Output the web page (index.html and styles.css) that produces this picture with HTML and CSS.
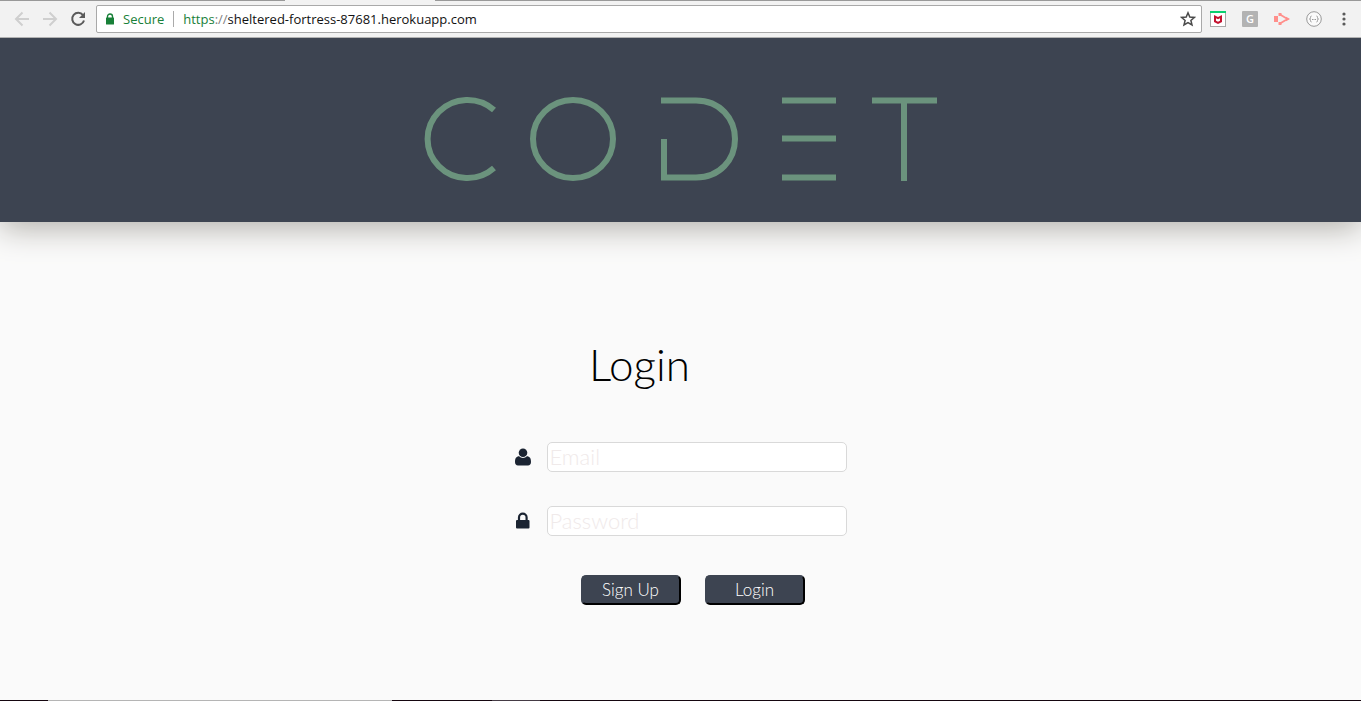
FILE: index.html
```html
<!DOCTYPE html>
<html lang="en">
<head>
<meta charset="utf-8">
<meta name="viewport" content="width=device-width, initial-scale=1">
<title>Codet</title>
<link rel="stylesheet" href="styles.css">
</head>
<body>
<div class="tab-edge"><span class="tab-gap"></span></div>
<nav class="toolbar" aria-label="Browser toolbar">
  <button class="tool" type="button" aria-label="Back" disabled>
    <svg width="16" height="16" viewBox="0 0 16 16" fill="none" stroke="#cfcfcf" stroke-width="2"><path d="M15 8H2M8.500 1.500L2 8l6.500 6.500"/></svg>
  </button>
  <button class="tool" type="button" aria-label="Forward" disabled>
    <svg width="16" height="16" viewBox="0 0 16 16" fill="none" stroke="#cfcfcf" stroke-width="2"><path d="M1 8h13M7.500 1.500L14 8l-6.500 6.500"/></svg>
  </button>
  <button class="tool" type="button" aria-label="Reload">
    <svg width="16" height="16" viewBox="0 0 16 16"><path d="M13 4.200A6 6 0 1 0 14 9.500" fill="none" stroke="#5a5a5a" stroke-width="2"/><path d="M15 1v6H9z" fill="#5a5a5a"/></svg>
  </button>
  <div class="omnibox">
    <svg width="10" height="12" viewBox="0 0 10 12"><path d="M2.500 5V3.500a2.500 2.500 0 0 1 5 0V5" fill="none" stroke="#188038" stroke-width="1.400"/><rect x="1" y="4.500" width="8" height="7" rx="0.500" fill="#188038"/></svg>
    <span class="secure">Secure</span>
    <div class="url" role="textbox" aria-label="Address"><span class="scheme">https</span><span class="slashes">://</span>sheltered-fortress-87681.herokuapp.com</div>
    <button class="star" type="button" aria-label="Bookmark this page">
      <svg width="16" height="16" viewBox="0 0 16 16" fill="none" stroke="#4a4a4a" stroke-width="1.500"><path d="M8 1.800l1.800 4.200 4.600.4-3.500 3 1.100 4.500L8 11.500l-4 2.400 1.100-4.500-3.500-3L6.200 6z"/></svg>
    </button>
  </div>
  <div class="extensions">
    <button class="tool" type="button" aria-label="Security extension">
      <svg width="16" height="16" viewBox="0 0 16 16"><rect x="0.500" y="0.500" width="15" height="15" fill="#fff" stroke="#a8a8a8"/><path d="M0 0h16v2H0z" fill="#0bd070"/><path d="M4 4l4 2 4-2v7l-4 2-4-2z" fill="#c4122f"/><path d="M6 7.200v2.500l2 1 2-1V7.200L8 8.300z" fill="#fff"/></svg>
    </button>
    <button class="tool" type="button" aria-label="G extension"><span class="g-badge">G</span></button>
    <button class="tool" type="button" aria-label="Capture extension">
      <svg width="16" height="16" viewBox="0 0 16 16"><path d="M0 5h4v6H0z" fill="#ff8f8b"/><path d="M6 3.500L13.500 8 6 12.500" fill="none" stroke="#ff8f8b" stroke-width="1.800"/><path d="M4.500 2h3v3h-3zM4.500 11h3v3h-3z" fill="#ff8f8b"/><path d="M12 5.800L16 8l-4 2.200z" fill="#ff8f8b"/></svg>
    </button>
    <button class="tool" type="button" aria-label="JSON extension">
      <svg width="16" height="16" viewBox="0 0 16 16" fill="none" stroke="#999"><circle cx="8" cy="8" r="7.300" fill="#fafafa"/><path d="M5.500 5Q4.500 5 4.500 6.500T3.500 8q1 0 1 1.500T5.500 11M10.500 5q1 0 1 1.500T12.500 8q-1 0-1 1.500t-1 1.500"/><path d="M6 8.500h4" stroke-dasharray="1 .5"/></svg>
    </button>
  </div>
  <button class="tool menu" type="button" aria-label="Menu">
    <svg width="4" height="16" viewBox="0 0 4 16" fill="#5a5a5a"><circle cx="2" cy="3" r="1.600"/><circle cx="2" cy="8" r="1.600"/><circle cx="2" cy="13" r="1.600"/></svg>
  </button>
</nav>
<header class="banner">
  <svg class="logo" width="518" height="86" viewBox="0 0 518 86" role="img" aria-label="Codet" fill="none" stroke="#6b937d" stroke-width="6">
    <path d="M72 14A39.800 39 0 1 0 72 72"/>
    <ellipse cx="151" cy="43" rx="40" ry="39"/>
    <path d="M239 4.500h35c24 0 39 18 39 38.500s-15 38.500-39 38.500h-32V43"/>
    <path d="M360 4.500h54M360 42.500h54M360 81.500h54"/>
    <path d="M450 4.500h65M482 4v81"/>
  </svg>
</header>
<main class="page">
  <form class="login">
    <h1 class="title">Login</h1>
    <div class="field">
      <label class="field-icon" for="email" aria-label="Email">
        <svg width="16" height="18" viewBox="0 0 16 18" fill="#1b2432"><circle cx="8" cy="4.700" r="4.300"/><path d="M4.200 8.300C1.200 8.300 0 10.500 0 14c0 2.200 1.200 3.500 3 3.500h10c1.800 0 3-1.300 3-3.500 0-3.500-1.200-5.700-4.200-5.700C10.800 9.300 9.500 10 8 10s-2.800-.7-3.800-1.700z"/></svg>
      </label>
      <input class="entry" id="email" type="email" placeholder="Email">
    </div>
    <div class="field">
      <label class="field-icon" for="password" aria-label="Password">
        <svg width="16" height="18" viewBox="0 0 16 18"><path d="M4 9V5.500a3.800 3.800 0 0 1 7.600 0V9" fill="none" stroke="#1b2432" stroke-width="2.200"/><rect x="1" y="8" width="13.500" height="8.500" rx="1" fill="#1b2432"/></svg>
      </label>
      <input class="entry" id="password" type="password" placeholder="Password">
    </div>
    <div class="actions">
      <button class="action" type="button">Sign Up</button>
      <button class="action" type="submit">Login</button>
    </div>
  </form>
</main>
<footer class="taskbar"><span class="task-window"></span><span class="task-window-small"></span></footer>
</body>
</html>
```
FILE: styles.css
```css
* { box-sizing: border-box; }

body {
  margin: 0;
  min-height: 100vh;
  display: flex;
  flex-direction: column;
  background: #fafafa;
  font-family: Lato, "Open Sans", sans-serif;
}

button { font-family: inherit; }
svg { display: block; }

.tab-edge {
  height: 1px;
  padding-left: 285px;
  background: #999;
}
.tab-gap {
  display: block;
  width: 150px;
  height: 1px;
  background: #f2f2f2;
}

.toolbar {
  position: relative;
  z-index: 1;
  display: flex;
  align-items: center;
  height: 37px;
  padding: 0 7px 0 14px;
  gap: 12px;
  background: #f2f2f2;
  border-bottom: 1px solid #b2b2b2;
  font-family: "Open Sans", sans-serif;
  font-size: 13px;
}
.tool {
  display: flex;
  flex: none;
  padding: 0;
  border: 0;
  background: none;
}
.omnibox {
  display: flex;
  flex: 1;
  align-items: center;
  height: 28px;
  margin-left: -2px;
  padding: 0 5px 0 8px;
  background: #fff;
  border: 1px solid #a9a9a9;
  border-radius: 2px;
}
.secure {
  margin-left: 8px;
  padding-right: 9px;
  border-right: 1px solid #aaa;
  line-height: 16px;
  color: #188038;
}
.url {
  flex: 1;
  padding-left: 9px;
  color: #111;
  white-space: nowrap;
}
.scheme { color: #188038; }
.slashes { color: #808080; }
.star {
  padding: 0;
  border: 0;
  background: none;
}
.extensions {
  display: flex;
  gap: 16px;
  margin-left: -4px;
}
.g-badge {
  width: 16px;
  height: 16px;
  border-radius: 1px;
  background: #b3b3b3;
  color: #fff;
  font: 600 11px/16px "Open Sans", sans-serif;
  text-align: center;
}
.menu { margin: 0 8px; }

.banner {
  display: flex;
  justify-content: center;
  padding: 58px 16px 40px;
  background: #3d4451;
  box-shadow: 0 6px 30px 0 #b0aea8;
}
.logo { max-width: 100%; }

.page {
  display: flex;
  flex: 1;
  justify-content: center;
  align-items: flex-start;
  padding-top: 114px;
}
.title {
  margin: 0 0 50px;
  padding-right: 82px;
  font-size: 44px;
  font-weight: 300;
  line-height: 56px;
  text-align: center;
  color: #000;
}
.field {
  display: flex;
  align-items: center;
  gap: 16px;
  margin-bottom: 34px;
}
.entry {
  width: 300px;
  height: 30px;
  padding: 0 2px 2px;
  border: 1px solid #d9d9d9;
  border-radius: 5px;
  background: #fff;
  font: 300 22px Lato, sans-serif;
  color: #1b2432;
}
.entry::placeholder { color: #f0eaea; opacity: 1; }
.actions {
  display: flex;
  gap: 24px;
  margin-top: 39px;
  padding-left: 66px;
}
.action {
  width: 100px;
  height: 30px;
  padding: 0 0 2px;
  border: 2px solid;
  border-color: #3d4451 #000 #000 #3d4451;
  border-radius: 5px;
  background: #3d4451;
  color: #fff;
  font-size: 17px;
  font-weight: 300;
}

.taskbar {
  display: flex;
  height: 1px;
  padding-left: 48px;
  gap: 100px;
  background: #15060f;
}
.task-window {
  width: 344px;
  background: #b5b5b5;
}
.task-window-small {
  width: 48px;
  background: #453b45;
}
```
